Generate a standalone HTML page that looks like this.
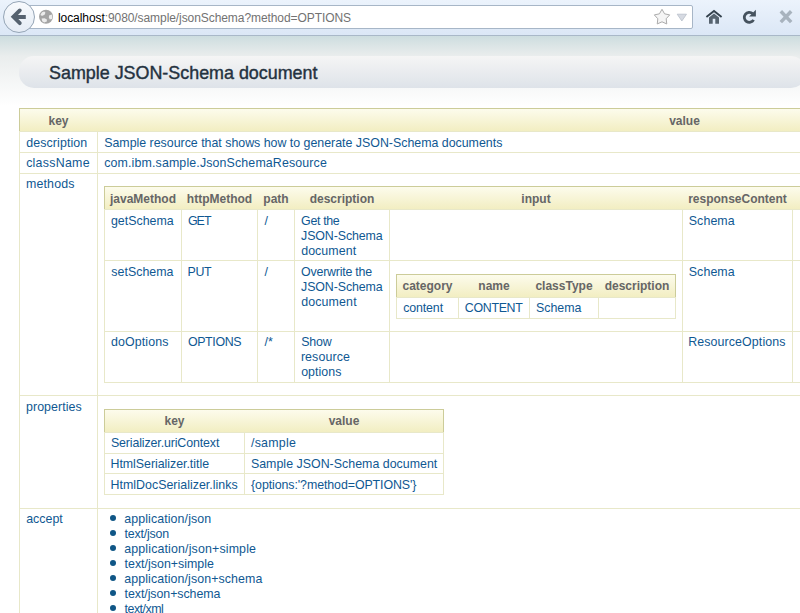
<!DOCTYPE html>
<html><head><meta charset="utf-8">
<style>
html,body{margin:0;padding:0;width:800px;height:613px;overflow:hidden;background:#fff}
body{position:relative;font-family:"Liberation Sans",sans-serif}
#tb{position:absolute;left:0;top:0;width:800px;height:35px;background:linear-gradient(#ecf3fc,#dbe7f6)}
#tbl{position:absolute;left:0;top:35px;width:800px;height:1px;background:#a9b8c8}
#pg{position:absolute;left:0;top:36px;width:800px;height:577px;background:linear-gradient(#CDDDDF 0,#EAEDED 20px,#FFFFFF 70px)}
#url{position:absolute;left:18px;top:5px;width:673px;height:22px;border:1px solid #a7b6c7;border-radius:2px;background:#fff}
#back{position:absolute;left:3px;top:1px;width:30px;height:30px;border:1px solid #95a5b6;border-radius:50%;background:linear-gradient(#f8fafd,#e5ecf5)}
.urlt{position:absolute;font-size:12px;line-height:16px;color:#727272;letter-spacing:-0.075px;white-space:nowrap}
#title{position:absolute;left:19px;top:56px;width:787px;height:32px;border-radius:15px;background:linear-gradient(#F5F5F5,#DEE3E9)}
#ttext{position:absolute;left:49px;top:63px;font-size:17.9px;line-height:20px;color:#243240;-webkit-text-stroke:0.4px #243240;white-space:nowrap}
.l{position:absolute}
.hd{position:absolute;background:linear-gradient(#fdfcee,#f2eec2)}
.t{position:absolute;line-height:15px;white-space:nowrap}
.d{font-size:12.4px;color:#0f5892}
.h{font-size:12px;font-weight:bold;color:#666}
.bul{position:absolute;width:6px;height:6px;border-radius:50%;background:#0f5686}
</style></head><body>
<div id="pg"></div>

<div id="tb"></div>
<div id="tbl"></div>
<div id="url"></div>
<div id="back"></div>
<svg width="36" height="36" style="position:absolute;left:0;top:0">
  <path d="M25.8 17 H14" fill="none" stroke="#56626f" stroke-width="4"/>
  <path d="M19.8 10.4 L13.4 16.8 L19.8 23.2" fill="none" stroke="#56626f" stroke-width="3.8" stroke-linecap="round" stroke-linejoin="miter"/>
</svg>
<svg width="16" height="16" style="position:absolute;left:38px;top:9px">
  <circle cx="8" cy="7.8" r="7" fill="#a4a4a4"/>
  <path d="M2.6 5.2 Q3.8 2.8 6.2 2.6 L7.4 3.4 L6.8 5.6 L4.6 6.8 L2.9 6.6 Z" fill="#ececec"/>
  <path d="M11 6.4 L13.8 5.6 Q14.6 7.8 14 10 L11.8 10.6 L10.9 8.6 Z" fill="#ececec"/>
  <path d="M3.6 9.6 L6.6 9.2 L8.9 10.6 L8.8 12.6 L6.2 13.6 L4.2 12.2 Z" fill="#ececec"/>
</svg>
<div class="urlt" style="left:58px;top:10px"><span style="color:#000">localhost</span>:9080/sample/jsonSchema?method=OPTIONS</div>
<svg width="20" height="20" style="position:absolute;left:652px;top:7px">
  <path d="M10.00 2.30 L12.59 6.84 L17.70 7.90 L14.18 11.76 L14.76 16.95 L10.00 14.80 L5.24 16.95 L5.82 11.76 L2.30 7.90 L7.41 6.84 Z" fill="#f5f5f5" stroke="#ababab" stroke-width="1" stroke-linejoin="round"/>
</svg>
<svg width="12" height="10" style="position:absolute;left:676px;top:13px">
  <path d="M1.2 1.2 L10.5 1.2 L5.85 8 Z" fill="#d6dae2" stroke="#b9c0ca" stroke-width="0.8"/>
</svg>
<svg width="40" height="26" style="position:absolute;left:700px;top:4px">
  <path d="M6.4 13 L14 6.9 L21.6 13" fill="none" stroke="#34414d" stroke-width="1.9"/>
  <path d="M9 13.4 L14 9.4 L19 13.4 L19 19.8 L15.3 19.8 L15.3 14.8 L12.7 14.8 L12.7 19.8 L9 19.8 Z" fill="#56636f"/>
</svg>
<svg width="40" height="26" style="position:absolute;left:735px;top:4px">
  <path d="M17.6 9.6 A5 5 0 1 0 18.6 15.9" fill="none" stroke="#45525e" stroke-width="2.8"/>
  <path d="M20.9 5.8 L20.9 12.6 L14.1 12.6 Z" fill="#45525e"/>
</svg>
<svg width="30" height="26" style="position:absolute;left:770px;top:4px">
  <path d="M10.8 7.3 L21.2 18.1 M21.2 7.3 L10.8 18.1" stroke="#a8b3be" stroke-width="3.5"/>
</svg>

<div id="title"></div>
<div id="ttext">Sample JSON-Schema document</div>
<div class="hd" style="left:19px;top:108px;width:1253px;height:23px"></div>
<div class="l" style="left:19px;top:131px;width:1253px;height:1px;background:#e8e8c9"></div>
<div class="l" style="left:19px;top:152px;width:1253px;height:1px;background:#e8e8c9"></div>
<div class="l" style="left:19px;top:173px;width:1253px;height:1px;background:#e8e8c9"></div>
<div class="l" style="left:19px;top:395px;width:1253px;height:1px;background:#e8e8c9"></div>
<div class="l" style="left:19px;top:508px;width:1253px;height:1px;background:#e8e8c9"></div>
<div class="l" style="left:19px;top:900px;width:1253px;height:1px;background:#e8e8c9"></div>
<div class="l" style="left:19px;top:131px;width:1px;height:770px;background:#e8e8c9"></div>
<div class="l" style="left:97px;top:131px;width:1px;height:770px;background:#e8e8c9"></div>
<div class="l" style="left:1271px;top:131px;width:1px;height:770px;background:#e8e8c9"></div>
<div class="l" style="left:19px;top:108px;width:1253px;height:1px;background:#cccc99"></div>
<div class="l" style="left:19px;top:108px;width:1px;height:23px;background:#cccc99"></div>
<div class="l" style="left:1271px;top:108px;width:1px;height:23px;background:#cccc99"></div>
<div class="t h" style="left:20px;top:114px;width:77px;text-align:center">key</div>
<div class="t h" style="left:98px;top:114px;width:1173px;text-align:center">value</div>
<div class="t d" style="left:26.23px;top:136px;letter-spacing:0.105px">description</div>
<div class="t d" style="left:104.19px;top:136px;letter-spacing:-0.010px">Sample resource that shows how to generate JSON-Schema documents</div>
<div class="t d" style="left:26.17px;top:156px;letter-spacing:0.260px">className</div>
<div class="t d" style="left:104.22px;top:156px;letter-spacing:0.135px">com.ibm.sample.JsonSchemaResource</div>
<div class="t d" style="left:25.98px;top:177px;letter-spacing:0.157px">methods</div>
<div class="t d" style="left:26.00px;top:400px;letter-spacing:0.060px">properties</div>
<div class="t d" style="left:26.22px;top:512px">accept</div>
<div class="hd" style="left:104px;top:186px;width:797px;height:23px"></div>
<div class="l" style="left:104px;top:209px;width:797px;height:1px;background:#e8e8c9"></div>
<div class="l" style="left:104px;top:260px;width:797px;height:1px;background:#e8e8c9"></div>
<div class="l" style="left:104px;top:331px;width:797px;height:1px;background:#e8e8c9"></div>
<div class="l" style="left:104px;top:382px;width:797px;height:1px;background:#e8e8c9"></div>
<div class="l" style="left:104px;top:209px;width:1px;height:174px;background:#e8e8c9"></div>
<div class="l" style="left:181px;top:209px;width:1px;height:174px;background:#e8e8c9"></div>
<div class="l" style="left:257px;top:209px;width:1px;height:174px;background:#e8e8c9"></div>
<div class="l" style="left:294px;top:209px;width:1px;height:174px;background:#e8e8c9"></div>
<div class="l" style="left:389px;top:209px;width:1px;height:174px;background:#e8e8c9"></div>
<div class="l" style="left:682px;top:209px;width:1px;height:174px;background:#e8e8c9"></div>
<div class="l" style="left:792px;top:209px;width:1px;height:174px;background:#e8e8c9"></div>
<div class="l" style="left:900px;top:209px;width:1px;height:174px;background:#e8e8c9"></div>
<div class="l" style="left:104px;top:186px;width:797px;height:1px;background:#cccc99"></div>
<div class="l" style="left:104px;top:186px;width:1px;height:23px;background:#cccc99"></div>
<div class="l" style="left:900px;top:186px;width:1px;height:23px;background:#cccc99"></div>
<div class="t h" style="left:105px;top:192px;width:76px;text-align:center">javaMethod</div>
<div class="t h" style="left:182px;top:192px;width:75px;text-align:center">httpMethod</div>
<div class="t h" style="left:258px;top:192px;width:36px;text-align:center">path</div>
<div class="t h" style="left:295px;top:192px;width:94px;text-align:center">description</div>
<div class="t h" style="left:390px;top:192px;width:292px;text-align:center">input</div>
<div class="t h" style="left:683px;top:192px;width:109px;text-align:center">responseContent</div>
<div class="t d" style="left:110.98px;top:214px;letter-spacing:0.010px">getSchema</div>
<div class="t d" style="left:187.88px;top:214px;letter-spacing:-0.913px">GET</div>
<div class="t d" style="left:264.50px;top:214px">/</div>
<div class="t d" style="left:301.08px;top:214px;letter-spacing:-0.328px">Get the</div>
<div class="t d" style="left:301.06px;top:229px;letter-spacing:-0.100px">JSON-Schema</div>
<div class="t d" style="left:301.18px;top:244px;letter-spacing:0.070px">document</div>
<div class="t d" style="left:688.74px;top:214px;letter-spacing:0.099px">Schema</div>
<div class="t d" style="left:111.25px;top:265px;letter-spacing:0.033px">setSchema</div>
<div class="t d" style="left:187.48px;top:265px;letter-spacing:-0.298px">PUT</div>
<div class="t d" style="left:264.50px;top:265px">/</div>
<div class="t d" style="left:301.11px;top:265px;letter-spacing:-0.229px">Overwrite the</div>
<div class="t d" style="left:301.06px;top:280px;letter-spacing:-0.100px">JSON-Schema</div>
<div class="t d" style="left:301.18px;top:295px;letter-spacing:0.141px">document</div>
<div class="t d" style="left:688.74px;top:265px;letter-spacing:0.099px">Schema</div>
<div class="t d" style="left:111.08px;top:335px;letter-spacing:0.098px">doOptions</div>
<div class="t d" style="left:187.91px;top:335px;letter-spacing:-0.352px">OPTIONS</div>
<div class="t d" style="left:264.50px;top:335px">/*</div>
<div class="t d" style="left:301.14px;top:335px;letter-spacing:-0.156px">Show</div>
<div class="t d" style="left:300.88px;top:350px;letter-spacing:0.108px">resource</div>
<div class="t d" style="left:301.18px;top:365px;letter-spacing:0.050px">options</div>
<div class="t d" style="left:688.28px;top:335px;letter-spacing:0.102px">ResourceOptions</div>
<div class="hd" style="left:396px;top:274px;width:280px;height:23px"></div>
<div class="l" style="left:396px;top:297px;width:280px;height:1px;background:#e8e8c9"></div>
<div class="l" style="left:396px;top:318px;width:280px;height:1px;background:#e8e8c9"></div>
<div class="l" style="left:396px;top:297px;width:1px;height:22px;background:#e8e8c9"></div>
<div class="l" style="left:458px;top:297px;width:1px;height:22px;background:#e8e8c9"></div>
<div class="l" style="left:529px;top:297px;width:1px;height:22px;background:#e8e8c9"></div>
<div class="l" style="left:598px;top:297px;width:1px;height:22px;background:#e8e8c9"></div>
<div class="l" style="left:675px;top:297px;width:1px;height:22px;background:#e8e8c9"></div>
<div class="l" style="left:396px;top:274px;width:280px;height:1px;background:#cccc99"></div>
<div class="l" style="left:396px;top:274px;width:1px;height:23px;background:#cccc99"></div>
<div class="l" style="left:675px;top:274px;width:1px;height:23px;background:#cccc99"></div>
<div class="t h" style="left:397px;top:279px;width:61px;text-align:center">category</div>
<div class="t h" style="left:459px;top:279px;width:70px;text-align:center">name</div>
<div class="t h" style="left:530px;top:279px;width:68px;text-align:center">classType</div>
<div class="t h" style="left:599px;top:279px;width:76px;text-align:center">description</div>
<div class="t d" style="left:403.22px;top:301px;letter-spacing:-0.131px">content</div>
<div class="t d" style="left:464.87px;top:301px;letter-spacing:-0.329px">CONTENT</div>
<div class="t d" style="left:535.94px;top:301px;letter-spacing:0.019px">Schema</div>
<div class="hd" style="left:104px;top:409px;width:340px;height:23px"></div>
<div class="l" style="left:104px;top:432px;width:340px;height:1px;background:#e8e8c9"></div>
<div class="l" style="left:104px;top:453px;width:340px;height:1px;background:#e8e8c9"></div>
<div class="l" style="left:104px;top:473px;width:340px;height:1px;background:#e8e8c9"></div>
<div class="l" style="left:104px;top:494px;width:340px;height:1px;background:#e8e8c9"></div>
<div class="l" style="left:104px;top:432px;width:1px;height:63px;background:#e8e8c9"></div>
<div class="l" style="left:244px;top:432px;width:1px;height:63px;background:#e8e8c9"></div>
<div class="l" style="left:443px;top:432px;width:1px;height:63px;background:#e8e8c9"></div>
<div class="l" style="left:104px;top:409px;width:340px;height:1px;background:#cccc99"></div>
<div class="l" style="left:104px;top:409px;width:1px;height:23px;background:#cccc99"></div>
<div class="l" style="left:443px;top:409px;width:1px;height:23px;background:#cccc99"></div>
<div class="t h" style="left:105px;top:414px;width:139px;text-align:center">key</div>
<div class="t h" style="left:245px;top:414px;width:198px;text-align:center">value</div>
<div class="t d" style="left:110.94px;top:436px;letter-spacing:-0.124px">Serializer.uriContext</div>
<div class="t d" style="left:110.48px;top:457px;letter-spacing:-0.031px">HtmlSerializer.title</div>
<div class="t d" style="left:110.48px;top:478px;letter-spacing:0.023px">HtmlDocSerializer.links</div>
<div class="t d" style="left:251.00px;top:436px;letter-spacing:0.235px">/sample</div>
<div class="t d" style="left:250.94px;top:457px;letter-spacing:0.015px">Sample JSON-Schema document</div>
<div class="t d" style="left:251.04px;top:478px;letter-spacing:-0.084px">{options:&#x27;?method=OPTIONS&#x27;}</div>
<div class="bul" style="left:110px;top:515px"></div>
<div class="t d" style="left:124.22px;top:512px;letter-spacing:0.104px">application/json</div>
<div class="bul" style="left:110px;top:530px"></div>
<div class="t d" style="left:124.56px;top:527px;letter-spacing:-0.189px">text/json</div>
<div class="bul" style="left:110px;top:545px"></div>
<div class="t d" style="left:124.22px;top:542px;letter-spacing:0.148px">application/json+simple</div>
<div class="bul" style="left:110px;top:560px"></div>
<div class="t d" style="left:124.56px;top:557px;letter-spacing:0.013px">text/json+simple</div>
<div class="bul" style="left:110px;top:575px"></div>
<div class="t d" style="left:124.22px;top:572px;letter-spacing:0.097px">application/json+schema</div>
<div class="bul" style="left:110px;top:590px"></div>
<div class="t d" style="left:124.56px;top:587px;letter-spacing:-0.062px">text/json+schema</div>
<div class="bul" style="left:110px;top:605px"></div>
<div class="t d" style="left:124.56px;top:602px;letter-spacing:-0.489px">text/xml</div>
</body></html>
